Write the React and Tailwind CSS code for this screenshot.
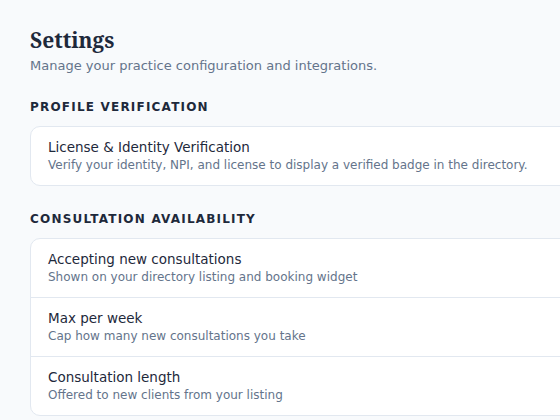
export default function App() {
  const rows = [
    ["Accepting new consultations", "Shown on your directory listing and booking widget"],
    ["Max per week", "Cap how many new consultations you take"],
    ["Consultation length", "Offered to new clients from your listing"],
  ];
  return (
    <div className="min-h-screen w-[560px] overflow-hidden bg-[#f8fafc] pl-[30px] pt-[25px] font-['DejaVu_Sans',sans-serif]">
      <div className="w-[620px]">
        <h1 className="font-['Noto_Serif',serif] text-[21px] font-bold leading-[30px] text-[#1e293b]">Settings</h1>
        <p className="mt-[1px] text-[13px] leading-[20px] text-[#64748b]">Manage your practice configuration and integrations.</p>

        <h2 className="mt-[22px] text-[12px] font-bold uppercase leading-[18px] tracking-[0.1em] text-[#1e293b]">Profile Verification</h2>
        <div className="mt-[10px] rounded-[10px] border border-[#e2e8f0] bg-white px-[17px] pt-[10px] pb-[11px]">
          <div className="text-[13.5px] leading-[20px] text-[#1e293b]">License &amp; Identity Verification</div>
          <div className="text-[12px] leading-[17px] text-[#64748b]">Verify your identity, NPI, and license to display a verified badge in the directory.</div>
        </div>

        <h2 className="mt-[24px] text-[12px] font-bold uppercase leading-[18px] tracking-[0.1em] text-[#1e293b]">Consultation Availability</h2>
        <div className="mt-[10px] divide-y divide-[#e2e8f0] rounded-[10px] border border-[#e2e8f0] bg-white">
          {rows.map(([t, d]) => (
            <div key={t} className="px-[17px] pt-[10px] pb-[11px]">
              <div className="text-[13.5px] leading-[20px] text-[#1e293b]">{t}</div>
              <div className="text-[12px] leading-[17px] text-[#64748b]">{d}</div>
            </div>
          ))}
        </div>
      </div>
    </div>
  );
}
